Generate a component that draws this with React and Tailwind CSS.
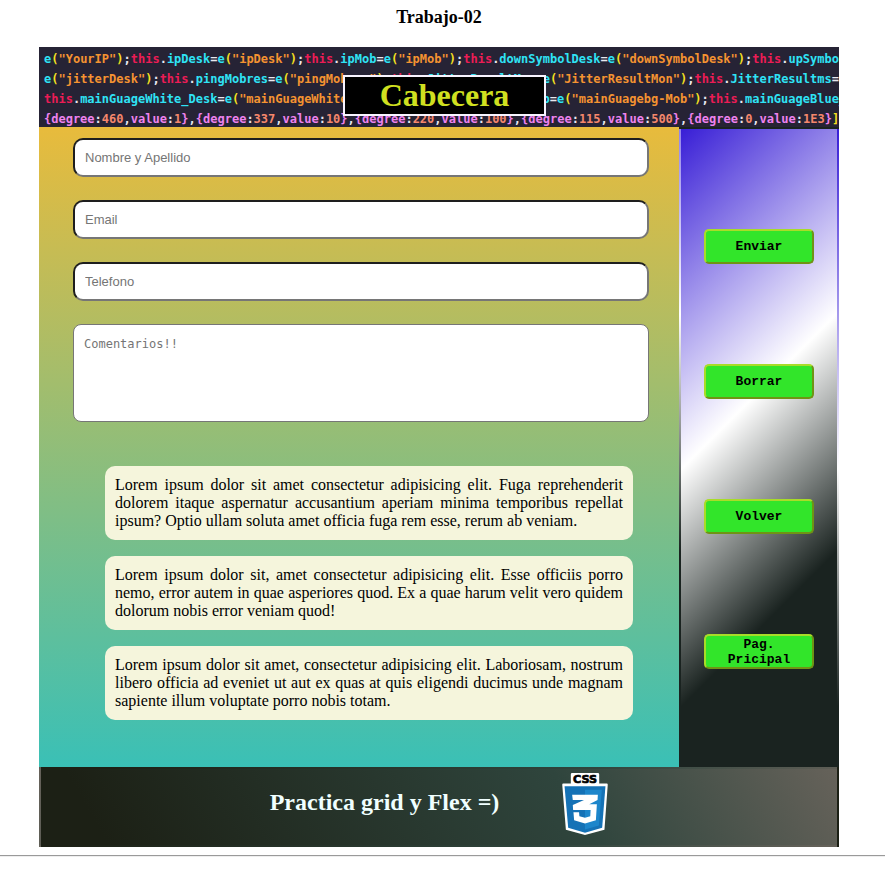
import React from "react";

const tone = {
  c: "text-[#2fe3f5]",
  y: "text-[#f5e020]",
  o: "text-[#f59331]",
  r: "text-[#ec1c55]",
  w: "text-[#e8e8f0]",
  p: "text-[#ee82ee]",
  n: "text-[#f5876c]",
};

const call = (id) => [["c", "e"], ["y", "("], ["o", `"${id}"`], ["y", ")"], ["w", ";"]];
const assign = (name) => [["r", "this"], ["w", "."], ["c", name], ["w", "="]];
const degree = (d, v, last) => [
  ["p", "{degree"], ["w", ":"], ["n", d], ["w", ","], ["p", "value"], ["w", ":"], ["n", v], ["p", "}"],
  last ? ["y", "]"] : ["w", ","],
];

const codeLines = [
  [
    ...call("YourIP"), ...assign("ipDesk"), ...call("ipDesk"), ...assign("ipMob"), ...call("ipMob"),
    ...assign("downSymbolDesk"), ...call("downSymbolDesk"), ["r", "this"], ["w", "."], ["c", "upSymbol"],
  ],
  [
    ...call("jitterDesk"), ...assign("pingMobres"), ...call("pingMobres"), ...assign("JitterResultMon"),
    ...call("JitterResultMon"), ...assign("JitterResultms"), ["c", "e"],
  ],
  [
    ...assign("mainGuageWhite_Desk"), ...call("mainGuageWhite_Desk"), ...assign("mainGuagebg_Mob"),
    ...call("mainGuagebg-Mob"), ["r", "this"], ["w", "."], ["c", "mainGuageBlue_"],
  ],
  [
    ...degree("460", "1"), ...degree("337", "10"), ...degree("220", "100"), ...degree("115", "500"),
    ...degree("0", "1E3", true),
  ],
];

const fields = [
  { id: "nombre", type: "text", label: "Nombre y Apellido" },
  { id: "email", type: "email", label: "Email" },
  { id: "telefono", type: "tel", label: "Telefono" },
];

const paragraphs = [
  "Lorem ipsum dolor sit amet consectetur adipisicing elit. Fuga reprehenderit dolorem itaque aspernatur accusantium aperiam minima temporibus repellat ipsum? Optio ullam soluta amet officia fuga rem esse, rerum ab veniam.",
  "Lorem ipsum dolor sit, amet consectetur adipisicing elit. Esse officiis porro nemo, error autem in quae asperiores quod. Ex a quae harum velit vero quidem dolorum nobis error veniam quod!",
  "Lorem ipsum dolor sit amet, consectetur adipisicing elit. Laboriosam, nostrum libero officia ad eveniet ut aut ex quas at quis eligendi ducimus unde magnam sapiente illum voluptate porro nobis totam.",
];

const actions = ["Enviar", "Borrar", "Volver", "Pag. Pricipal"];

function Header() {
  return (
    <header className="relative col-span-2 h-20 overflow-hidden bg-[#262335]">
      <div
        aria-hidden="true"
        className="whitespace-pre pl-[5px] pt-[2px] font-['DejaVu_Sans_Mono',monospace] text-[12px] font-bold leading-[20px]"
      >
        {codeLines.map((line, i) => (
          <div key={i}>
            {line.map(([k, text], j) => (
              <span key={j} className={tone[k]}>{text}</span>
            ))}
          </div>
        ))}
      </div>
      <div className="absolute inset-x-0 top-7 flex justify-center pl-[11px]">
        <h2 className="border-2 border-[#f8f4ff] bg-black px-[35px] text-[32px] font-bold leading-[37px] text-[#d0e020]">
          Cabecera
        </h2>
      </div>
    </header>
  );
}

function Css3Logo() {
  return (
    <svg viewBox="186 68 138 188" className="h-[62px] w-[46px]" role="img" aria-label="CSS3">
      <path fill="#fff" d="M216 68H294Q298 68 298 72V100H321Q324 100 324 104L314 240L255 256L197 240L186 104Q186 100 189 100H212V72Q212 68 216 68Z" />
      <path fill="#1572b6" d="M193 108H317L307 234L255 249L204 234Z" />
      <path fill="#1d86cb" d="M255 119H306L297 227L255 239Z" />
      <path fill="#fff" d="M216 134H294L293 150L268 163H291L288 211L255 221L222 211L220 187H237L238 199L255 204L271 199L272 180H219L218 165L252 150H218Z" />
      <text
        x="255" y="98" textAnchor="middle" fontSize="34" fontWeight="700" fill="#000" stroke="#000" strokeWidth="2"
        fontFamily="'DejaVu Sans', sans-serif"
      >
        CSS
      </text>
    </svg>
  );
}

export default function App() {
  return (
    <div className="bg-white font-['Liberation_Serif',serif] text-black">
      <div className="pr-[7px]">
        <h1 className="pb-[19px] pt-[7px] text-center text-[18px] font-bold leading-[21px]">Trabajo-02</h1>
        <div className="mx-auto grid max-w-[800px] grid-cols-[4fr_1fr]">
          <Header />

          <main className="bg-[linear-gradient(to_bottom,#e8bb3c,#3ac0b6)] pb-[47px] pl-[34px] pr-[30px] pt-[11px]">
            <form className="flex flex-col gap-[23px]">
              {fields.map((f) => (
                <input
                  key={f.id}
                  id={f.id}
                  type={f.type}
                  aria-label={f.label}
                  placeholder={f.label}
                  className="h-[39px] w-full rounded-[10px] border-2 border-b-[#767676] border-l-[#1e1e1e] border-r-[#767676] border-t-[#1e1e1e] bg-white px-[10px] font-['Liberation_Sans',sans-serif] text-[13px] placeholder:text-[#757575]"
                />
              ))}
              <textarea
                id="comentarios"
                aria-label="Comentarios"
                placeholder="Comentarios!!"
                className="block h-[98px] w-full resize-none rounded-[8px] border border-[#767676] bg-white p-[10px] font-['DejaVu_Sans_Mono',monospace] text-[12px] leading-[18px] placeholder:text-[#757575]"
              />
            </form>
            <section className="mt-11 flex flex-col gap-4 pl-8 pr-4">
              {paragraphs.map((p) => (
                <p key={p} className="rounded-[10px] bg-[#f5f5dc] p-[10px] text-justify text-[16px] leading-[18px]">
                  {p}
                </p>
              ))}
            </section>
          </main>

          <div className="flex bg-[#1a2320] py-[2px]">
            <aside className="flex flex-1 flex-col items-center gap-[100px] border-x-2 border-transparent bg-[linear-gradient(135deg,#381ed6,#ffffff_43%,#1a2320_73%)] pt-[100px]">
              {actions.map((label) => (
                <button
                  key={label}
                  type="button"
                  className="h-[35px] w-[110px] rounded-[5px] border-2 border-b-[#6f9414] border-l-[#a8dc28] border-r-[#6f9414] border-t-[#a8dc28] bg-[#32e52a] px-[6px] font-['Liberation_Mono',monospace] text-[13px] font-bold leading-[15px]"
                >
                  {label}
                </button>
              ))}
            </aside>
          </div>

          <footer className="col-span-2 flex h-20 items-start justify-center gap-[63px] border-2 border-transparent bg-[linear-gradient(60deg,#1c2015_8%,#2f453d_66%,#66625a)] pt-1">
            <p className="pt-[15px] text-[24px] font-bold leading-[28px] text-[#f0ffff]">Practica grid y Flex =)</p>
            <Css3Logo />
          </footer>
        </div>
      </div>
      <hr className="mt-2 h-[2px] border-b border-t border-b-[#eeeeee] border-t-[#9a9a9a]" />
    </div>
  );
}
